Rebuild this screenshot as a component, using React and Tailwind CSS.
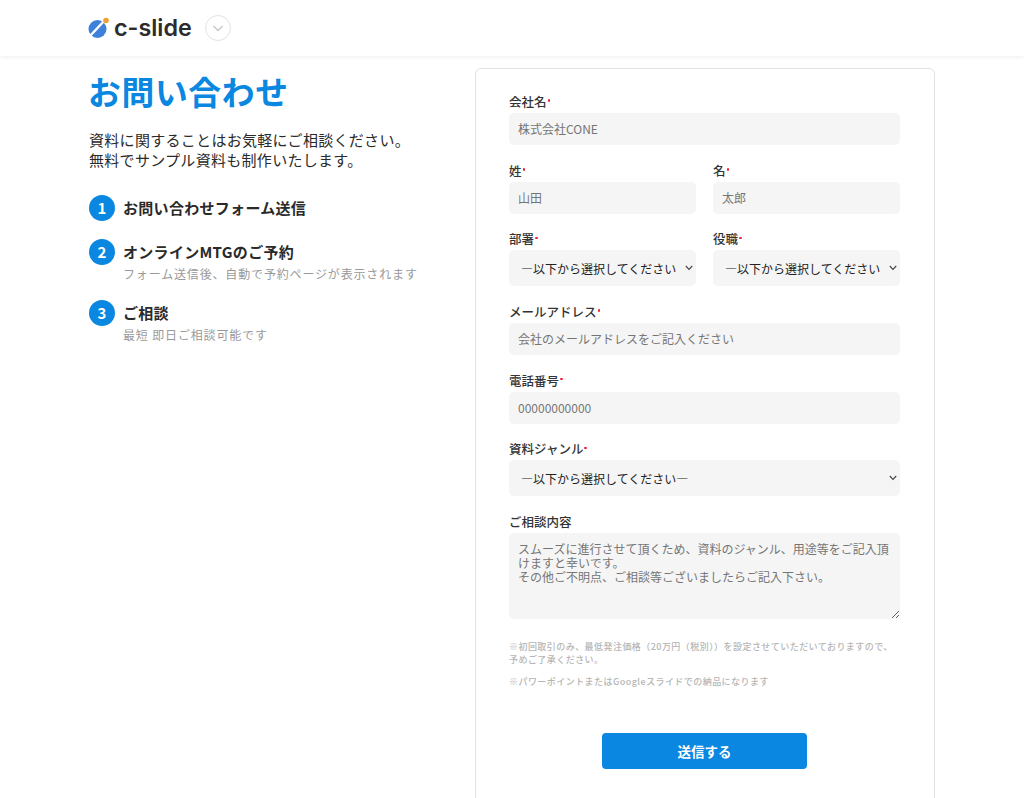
import React from 'react';

const font = "font-['Noto_Sans_CJK_JP','Noto_Sans',sans-serif]";

function Label({ text, required = true }) {
  return (
    <label className="block text-[12.5px] leading-[19px] font-medium text-[#333] mb-[2px]">
      {text}
      {required && <span className="inline-block w-[2.5px] h-[2.5px] ml-[1px] mb-[6px] align-middle rounded-full bg-[#f0203c]"></span>}
    </label>
  );
}

function TextField({ label, placeholder }) {
  return (
    <div>
      <Label text={label} />
      <input
        placeholder={placeholder}
        className="block w-full h-[32px] px-[9px] pb-[1px] bg-[#f5f5f5] rounded-[5px] text-[12px] outline-none placeholder:text-[#757575]"
      />
    </div>
  );
}

function SelectField({ label }) {
  return (
    <div>
      <Label text={label} />
      <div className="relative">
        <select className="block w-full h-[36px] pl-[12px] pr-[20px] pt-[1px] appearance-none bg-[#f5f5f5] rounded-[5px] text-[12px] text-[#222] outline-none">
          <option>―以下から選択してください―</option>
        </select>
        <svg className="absolute right-[3px] top-[15px] pointer-events-none" width="8" height="6" viewBox="0 0 8 6" fill="none" stroke="#444" strokeWidth="1.1">
          <path d="M0.8 1 L4 4.4 L7.2 1" />
        </svg>
      </div>
    </div>
  );
}

function Step({ num, title, sub }) {
  return (
    <div className="flex gap-[8px]">
      <div className="w-[26px] h-[26px] rounded-full bg-[#0a87e0] text-white text-[15px] font-bold flex items-center justify-center shrink-0">
        {num}
      </div>
      <div>
        <div className="text-[15px] leading-[26px] font-bold text-[#2a2a2a] tracking-[0.02em]">{title}</div>
        {sub && <div className="text-[12px] leading-[16px] mt-[1px] text-[#999] tracking-[0.07em]">{sub}</div>}
      </div>
    </div>
  );
}

export default function App() {
  return (
    <div className={`${font} h-[798px] overflow-hidden bg-white`}>
      {/* Header */}
      <header className="h-[56px] bg-white shadow-[0_1px_4px_rgba(0,0,0,0.07)] flex items-center pl-[88px] gap-[13px]">
        <div className="flex items-center gap-[4px]">
          <svg width="22" height="22" viewBox="0 0 22 22">
            <circle cx="9.5" cy="12" r="9" fill="#3f80dc" />
            <path d="M2 19 L16 4" stroke="#fff" strokeWidth="2.4" />
            <circle cx="18" cy="3.5" r="2.8" fill="#f0a030" />
          </svg>
          <span className="font-['Inter',sans-serif] text-[23.3px] font-semibold text-[#2c2c2c] leading-none">c-slide</span>
        </div>
        <div className="w-[26px] h-[26px] rounded-full border border-[#e3e3e3] flex items-center justify-center">
          <svg width="12" height="12" viewBox="0 0 12 12" fill="none" stroke="#c8c8c8" strokeWidth="1.4">
            <path d="M1.5 4 L6 8.5 L10.5 4" />
          </svg>
        </div>
      </header>

      <main className="flex pt-[12px] pl-[89px]">
        {/* Left column */}
        <div className="w-[386px] shrink-0">
          <h1 className="-ml-[1px] -mt-[1px] text-[32.8px] leading-[47px] font-bold text-[#0a87e0] tracking-[0.02em]">お問い合わせ</h1>
          <p className="mt-[16px] text-[15px] leading-[20px] text-[#2a2a2a] tracking-[0.02em]">
            資料に関することはお気軽にご相談ください。
            <br />
            無料でサンプル資料も制作いたします。
          </p>
          <div className="mt-[25px] flex flex-col gap-[18px]">
            <Step num="1" title="お問い合わせフォーム送信" />
            <Step num="2" title="オンラインMTGのご予約" sub="フォーム送信後、自動で予約ページが表示されます" />
            <Step num="3" title="ご相談" sub="最短 即日ご相談可能です" />
          </div>
        </div>

        {/* Form card */}
        <div className="w-[460px] h-[760px] border border-[#e2e2e2] rounded-[6px] pl-[33px] pr-[34px] pt-[23px]">
          <div className="flex flex-col gap-[15.67px]">
            <TextField label="会社名" placeholder="株式会社CONE" />
            <div className="grid grid-cols-2 gap-[17px]">
              <TextField label="姓" placeholder="山田" />
              <TextField label="名" placeholder="太郎" />
            </div>
            <div className="grid grid-cols-2 gap-[17px]">
              <SelectField label="部署" />
              <SelectField label="役職" />
            </div>
            <TextField label="メールアドレス" placeholder="会社のメールアドレスをご記入ください" />
            <TextField label="電話番号" placeholder="00000000000" />
            <SelectField label="資料ジャンル" />
            <div>
              <Label text="ご相談内容" required={false} />
              <textarea
                placeholder={'スムーズに進行させて頂くため、資料のジャンル、用途等をご記入頂けますと幸いです。\nその他ご不明点、ご相談等ございましたらご記入下さい。'}
                className="block w-full h-[86px] px-[9px] py-[9px] bg-[#f5f5f5] rounded-[5px] text-[12px] leading-[14px] outline-none placeholder:text-[#757575]"
              />
            </div>
          </div>
          <div className="mt-[21px] text-[9px] leading-[13px] text-[#b5b5b5] tracking-[0.05em] font-medium">
            <p>※初回取引のみ、最低発注価格（20万円（税別））を設定させていただいておりますので、予めご了承ください。</p>
            <p className="mt-[9px]">※パワーポイントまたはGoogleスライドでの納品になります</p>
          </div>
          <button className="block mx-auto mt-[45px] w-[205px] h-[36px] bg-[#0a87e0] rounded-[4px] text-white text-[13.5px] font-bold">
            送信する
          </button>
        </div>
      </main>
    </div>
  );
}
